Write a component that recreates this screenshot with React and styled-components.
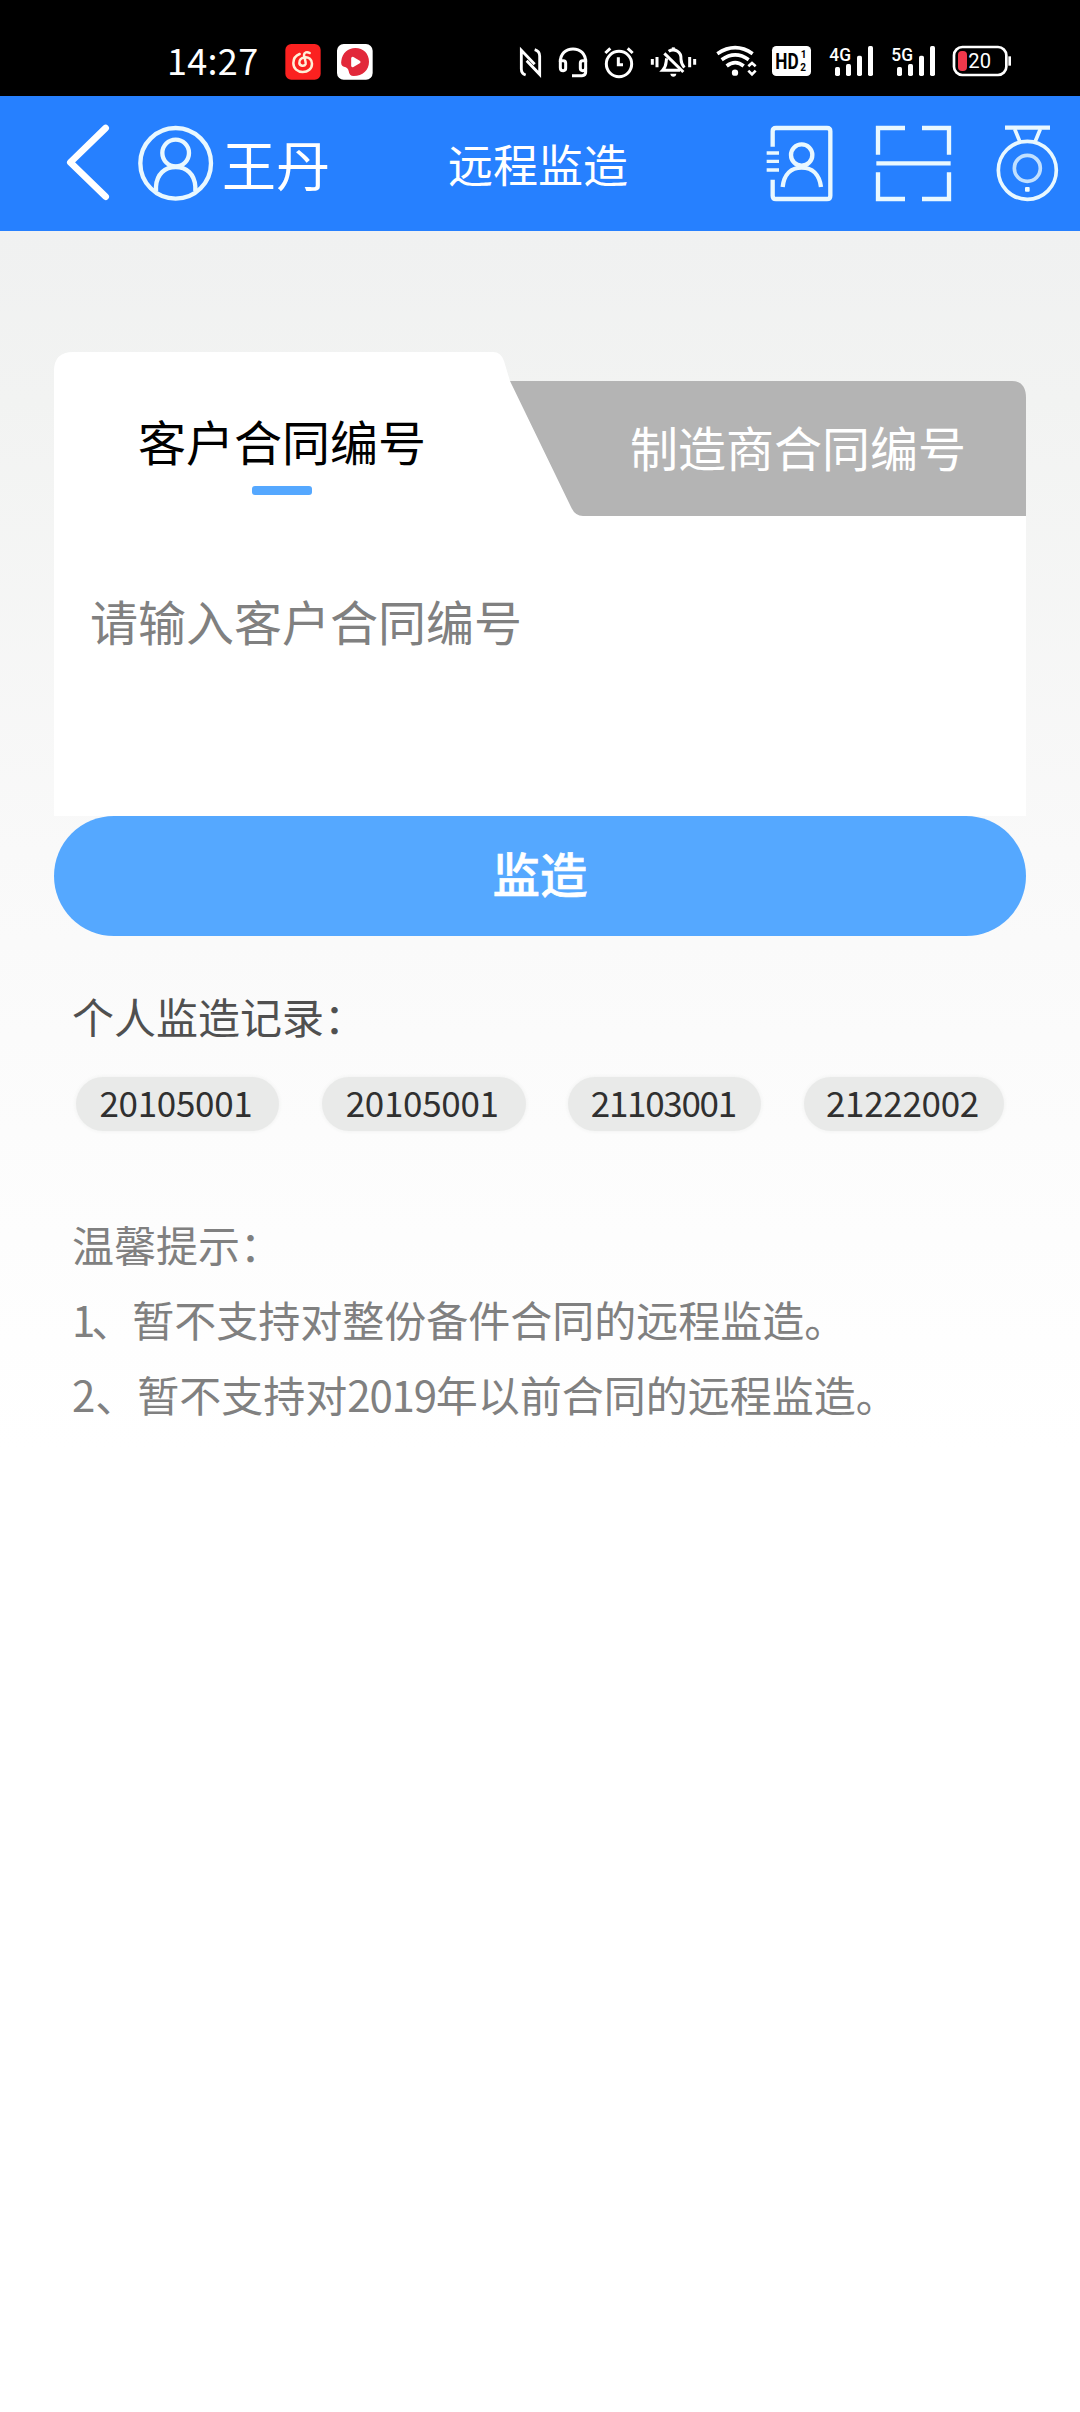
import React from "react";
import styled, { createGlobalStyle } from "styled-components";

const GlobalStyle = createGlobalStyle`
  * { box-sizing: border-box; }
  html, body { margin: 0; padding: 0; background: #fff; }
  body { font-family: "Noto Sans CJK SC", "Noto Sans", sans-serif; }
`;

const Screen = styled.div`
  width: 1080px;
  height: 2412px;
  display: flex;
  flex-direction: column;
  background: linear-gradient(180deg, #f0f1f1 231px, #f2f3f2 400px, #f9f9f9 850px, #fcfcfc 1130px, #ffffff 1450px);
  overflow: hidden;
`;

/* ---------- status bar ---------- */

const StatusBar = styled.header`
  height: 96px;
  padding: 28px 68px 0 167px;
  display: flex;
  align-items: center;
  justify-content: space-between;
  background: #000;
  color: #fff;
`;

const StatusGroup = styled.div`
  display: flex;
  align-items: center;
  gap: 16px;
`;

const Clock = styled.span`
  width: 102px;
  padding-bottom: 6px;
  font-size: 36px;
  line-height: 36px;
  letter-spacing: 0.3px;
  white-space: nowrap;
`;

const StatusSvg = styled.svg`
  display: block;
  flex: none;
  width: ${(p) => p.$w}px;
  height: 36px;
  overflow: visible;
`;

const StatusIcon = ({ x, w, children }) => (
  <StatusSvg $w={w / 3} viewBox={`${x} 72 ${w} 108`} fill="none" stroke="#fff" strokeWidth="9">
    {children}
  </StatusSvg>
);

const MusicIcon = () => (
  <StatusIcon x={435} w={108}>
    <rect x="436" y="72" width="106" height="107" rx="18" fill="#fb2120" stroke="none" />
    <g stroke="#fff0d8" strokeWidth="7.5" strokeLinecap="round">
      <path d="M479 102C466 107 460 117 460 129C460 146 473 156 488 156C504 156 516 146 516 131C516 118 506 111 495 112C484 113 477 120 478 129C479 138 493 141 497 132C499 127 492 113 492 105C492 97 501 94 509 99" />
    </g>
  </StatusIcon>
);

const VideoIcon = () => (
  <StatusIcon x={591} w={108}>
    <rect x="591" y="72" width="107" height="107" rx="20" fill="#fff" stroke="none" />
    <path
      d="M646 84C670 84 687 101 687 125C687 150 668 168 641 168C632 168 627 162 626 153C625 145 620 142 612 140C605 138 602 131 604 122C607 99 624 84 646 84Z"
      fill="#e2283a"
      stroke="none"
    />
    <path d="M638 115L657 126L638 137Z" fill="#fff" stroke="#fff" strokeWidth="9" strokeLinejoin="round" />
  </StatusIcon>
);

const NfcIcon = () => (
  <StatusIcon x={54} w={72}>
    <g strokeWidth="8.5">
      <path d="M77 165C68 162 64 156 64 147V91L104 133" />
      <path d="M104 89C114 92 119 98 119 108V163L80 122" />
    </g>
  </StatusIcon>
);

const HeadsetIcon = () => (
  <StatusIcon x={174} w={90}>
    <g strokeWidth="9">
      <path d="M181 126C181 101 197 87 219 87S257 101 257 126" />
      <path d="M181 122H190Q197 122 197 129V145Q197 152 190 152Q181 152 181 143Z" />
      <path d="M257 122H248Q241 122 241 129V145Q241 152 248 152Q257 152 257 143Z" />
      <path d="M257 143V156Q257 167 246 167H216" />
    </g>
  </StatusIcon>
);

const AlarmIcon = () => (
  <StatusIcon x={312} w={90}>
    <circle cx="357" cy="132" r="38" strokeWidth="9" />
    <path d="M355 112V134H369" strokeWidth="9" />
    <path d="M316 99L331 85M398 99L383 85" strokeWidth="9" />
  </StatusIcon>
);

const MuteBellIcon = () => (
  <StatusIcon x={450} w={144}>
    <g strokeWidth="9">
      <path d="M457 117V134M471 111V142M569 111V142M584 117V134" />
      <path d="M500 115C497 126 501 137 488 151H540" />
      <path d="M506 94C522 83 545 95 543 118Q543 130 553 143" />
      <path d="M520 82V90" />
      <path d="M493 100L550 156" />
    </g>
    <path d="M511 161H529Q528 170 520 170T511 161Z" fill="#fff" stroke="none" />
  </StatusIcon>
);

const WifiIcon = () => (
  <StatusIcon x={642} w={126}>
    <path d="M652 101Q706 65 758 101M665 119Q706 90 746 119M680 138Q706 118 731 138" strokeWidth="11" />
    <circle cx="705" cy="158" r="9.5" fill="#fff" stroke="none" />
    <path d="M745 139L756 129L767 139M745 152L756 163L767 152" strokeWidth="8" />
  </StatusIcon>
);

const svgText = {
  stroke: "none",
  fontFamily: '"Roboto", "Noto Sans", sans-serif',
};

const HdIcon = () => (
  <StatusIcon x={36} w={120}>
    <rect x="36" y="78" width="117" height="90" rx="13" fill="#fff" stroke="none" />
    <g fill="#000" {...svgText} fontWeight="700">
      <text x="46" y="147" fontSize="64" textLength="70" lengthAdjust="spacingAndGlyphs">HD</text>
      <text x="122" y="115" fontSize="30">1</text>
      <text x="121" y="153" fontSize="30">2</text>
    </g>
  </StatusIcon>
);

const SignalIcon = ({ x, label }) => (
  <StatusIcon x={x} w={138}>
    <text x={x + 4} y="122" fontSize="57" fontWeight="500" fill="#fff" textLength="65" lengthAdjust="spacingAndGlyphs" {...svgText}>
      {label}
    </text>
    <g fill="#fff" stroke="none">
      <rect x={x + 21} y="141" width="15" height="27" rx="5" />
      <rect x={x + 54} y="132" width="15" height="36" rx="5" />
      <rect x={x + 87} y="107" width="15" height="61" rx="5" />
      <rect x={x + 120} y="78" width="15" height="90" rx="5" />
    </g>
  </StatusIcon>
);

const BatteryIcon = () => (
  <StatusIcon x={576} w={180}>
    <rect x="582" y="81" width="157" height="84" rx="25" strokeWidth="8" />
    <rect x="594" y="93" width="27" height="60" rx="12" fill="#f0384c" stroke="none" />
    <path d="M749 109V137" strokeWidth="8" />
    <text x="625" y="145" fontSize="62" fontWeight="400" fill="#fff" textLength="68" lengthAdjust="spacingAndGlyphs" {...svgText}>
      20
    </text>
  </StatusIcon>
);

/* ---------- title bar ---------- */

const TitleBar = styled.nav`
  height: 135px;
  display: grid;
  grid-template-columns: 448px 180px 1fr;
  align-items: center;
  padding-bottom: 2px;
  background: #2680ff;
  color: #fff;
`;

const UserArea = styled.div`
  display: flex;
  align-items: center;
  height: 78px;
  padding-left: 65px;
`;

const UserName = styled.span`
  margin-left: 8px;
  padding-top: 2px;
  font-size: 54px;
  line-height: 78px;
`;

const Title = styled.h1`
  margin: 0;
  padding-top: 3px;
  font-size: 45px;
  font-weight: 400;
  line-height: 60px;
  white-space: nowrap;
`;

const Actions = styled.div`
  display: flex;
  justify-content: flex-end;
  align-items: center;
  padding-right: 21px;
`;

const BarSvg = styled.svg`
  display: block;
  flex: none;
  width: ${(p) => p.$w}px;
  height: 78px;
  margin-left: ${(p) => p.$ml || 0}px;
`;

const BarIcon = ({ x, w, ml, children }) => (
  <BarSvg $w={w / 3} $ml={ml} viewBox={`${x} 102 ${w} 234`} fill="none" stroke="#e9f8ff" strokeWidth="13">
    {children}
  </BarSvg>
);

/* ---------- contract form ---------- */

const Content = styled.main`
  display: flex;
  flex-direction: column;
  padding: 120px 54px 0;
`;

const Tabs = styled.div`
  height: 165px;
  display: flex;
  align-items: flex-end;
`;

const ActiveTab = styled.button`
  width: 546px;
  height: 165px;
  flex: none;
  display: flex;
  flex-direction: column;
  align-items: center;
  border: 0;
  padding: 53px 90px 0 0;
  background: #fff;
  color: #000;
  font: 400 48px/72px "Noto Sans CJK SC", sans-serif;
  clip-path: path("M0 165V20Q0 1 19 1H439Q447 1 450 10L456 30H546V165Z");

  &::after {
    content: "";
    width: 60px;
    height: 9px;
    margin-top: 10px;
    border-radius: 3px;
    background: #55a8ff;
  }
`;

const InactiveTab = styled.button`
  width: 516px;
  height: 135px;
  flex: none;
  margin-left: -90px;
  border: 0;
  padding: 0 0 4px 60px;
  text-align: center;
  background: #b4b4b4;
  color: #fff;
  font: 400 48px/131px "Noto Sans CJK SC", sans-serif;
  clip-path: path("M0 0H502Q516 0 516 17V135H73Q65 135 61 126Z");
`;

const Card = styled.section`
  height: 300px;
  padding: 66px 36px 0;
  background: #fff;
`;

const ContractInput = styled.input`
  display: block;
  width: 100%;
  height: 76px;
  border: 0;
  padding: 0;
  outline: none;
  background: transparent;
  font: 400 48px/76px "Noto Sans CJK SC", sans-serif;

  &::placeholder {
    color: #808080;
    opacity: 1;
  }
`;

const SubmitButton = styled.button`
  height: 120px;
  border: 0;
  padding: 0 0 6px;
  border-radius: 60px;
  background: #55a8ff;
  color: #fff;
  font: 500 47.5px/114px "Noto Sans CJK SC", sans-serif;
  -webkit-text-stroke: 0.6px #fff;
`;

const RecordLabel = styled.h2`
  margin: 50px 0 0 18px;
  color: #505050;
  font-size: 42px;
  font-weight: 400;
  line-height: 60px;
`;

const Records = styled.div`
  display: flex;
  justify-content: space-between;
  margin: 31px 22px 0;
`;

const Chip = styled.span`
  width: ${(p) => p.$w}px;
  height: 54px;
  padding-right: 3px;
  border-radius: 27px;
  background: #e9eae9;
  box-shadow: 0 0 4px #eeefee;
  color: #303030;
  font-size: 35px;
  line-height: 50px;
  letter-spacing: ${(p) => p.$ls}px;
  text-align: center;
`;

const Tips = styled.section`
  margin: 75px 0 0 18px;
  color: #808080;
  font-size: 42px;
  line-height: 75px;
  white-space: nowrap;
`;

const TipLine = styled.p`
  margin: 0;
`;

const Num = styled.span`
  letter-spacing: ${(p) => p.$ls}px;
`;

const records = [
  { no: "20105001", w: 203, ls: -0.3 },
  { no: "20105001", w: 204, ls: -0.3 },
  { no: "21103001", w: 193, ls: -1.3 },
  { no: "21222002", w: 200, ls: -0.3 },
];

export default function App() {
  return (
    <>
      <GlobalStyle />
      <Screen>
        <StatusBar>
          <StatusGroup>
            <Clock>14:27</Clock>
            <MusicIcon />
            <VideoIcon />
          </StatusGroup>
          <StatusGroup>
            <NfcIcon />
            <HeadsetIcon />
            <AlarmIcon />
            <MuteBellIcon />
            <WifiIcon />
            <HdIcon />
            <SignalIcon x={204} label="4G" />
            <SignalIcon x={390} label="5G" />
            <BatteryIcon />
          </StatusGroup>
        </StatusBar>

        <TitleBar>
          <UserArea>
            <BarIcon x={195} w={138}>
              <path d="M317 114L211 217L317 320" stroke="#fff" strokeWidth="20" strokeLinecap="round" strokeLinejoin="round" />
            </BarIcon>
            <BarIcon x={411} w={231} ml={26}>
              <circle cx="527" cy="220" r="106" />
              <circle cx="527" cy="189" r="40" />
              <path d="M468 303V290C470 252 495 231 527 231S584 252 586 290V303" />
            </BarIcon>
            <UserName>王丹</UserName>
          </UserArea>
          <Title>远程监造</Title>
          <Actions>
            <BarIcon x={138} w={201}>
              <path d="M158 170V124Q158 114 168 114H321Q331 114 331 124V317Q331 327 321 327H168Q158 327 158 317V269" />
              <path d="M140 189H177M140 214H177M140 240H177" strokeWidth="10" />
              <circle cx="245" cy="195" r="32" />
              <path d="M188 291C192 253 214 233 245 233S298 253 303 291" />
            </BarIcon>
            <BarIcon x={465} w={231} ml={42}>
              <path d="M555 114H474V194M606 114H687V194M474 247V327H555M687 247V327H606M469 220H692" />
            </BarIcon>
            <BarIcon x={828} w={189} ml={44}>
              <path d="M855 113H990" />
              <path d="M884 117L900 156M961 117L945 156" strokeWidth="11" />
              <circle cx="922" cy="241" r="87" strokeWidth="11" />
              <circle cx="922" cy="235" r="39" strokeWidth="11" opacity="0.8" />
              <rect x="915" y="291" width="14" height="14" rx="3" fill="#effbff" stroke="none" />
            </BarIcon>
          </Actions>
        </TitleBar>

        <Content>
          <Tabs>
            <ActiveTab>客户合同编号</ActiveTab>
            <InactiveTab>制造商合同编号</InactiveTab>
          </Tabs>
          <Card>
            <ContractInput placeholder="请输入客户合同编号" />
          </Card>
          <SubmitButton>监造</SubmitButton>
          <RecordLabel>个人监造记录：</RecordLabel>
          <Records>
            {records.map((r, i) => (
              <Chip key={i} $w={r.w} $ls={r.ls}>
                {r.no}
              </Chip>
            ))}
          </Records>
          <Tips>
            <TipLine>温馨提示：</TipLine>
            <TipLine>
              <Num $ls={-4}>1</Num>
              <Num $ls={-1}>、</Num>暂不支持对整份备件合同的远程监造。
            </TipLine>
            <TipLine>
              <Num $ls={0}>2</Num>、暂不支持对<Num $ls={-1.2}>2019</Num>年以前合同的远程监造。
            </TipLine>
          </Tips>
        </Content>
      </Screen>
    </>
  );
}
